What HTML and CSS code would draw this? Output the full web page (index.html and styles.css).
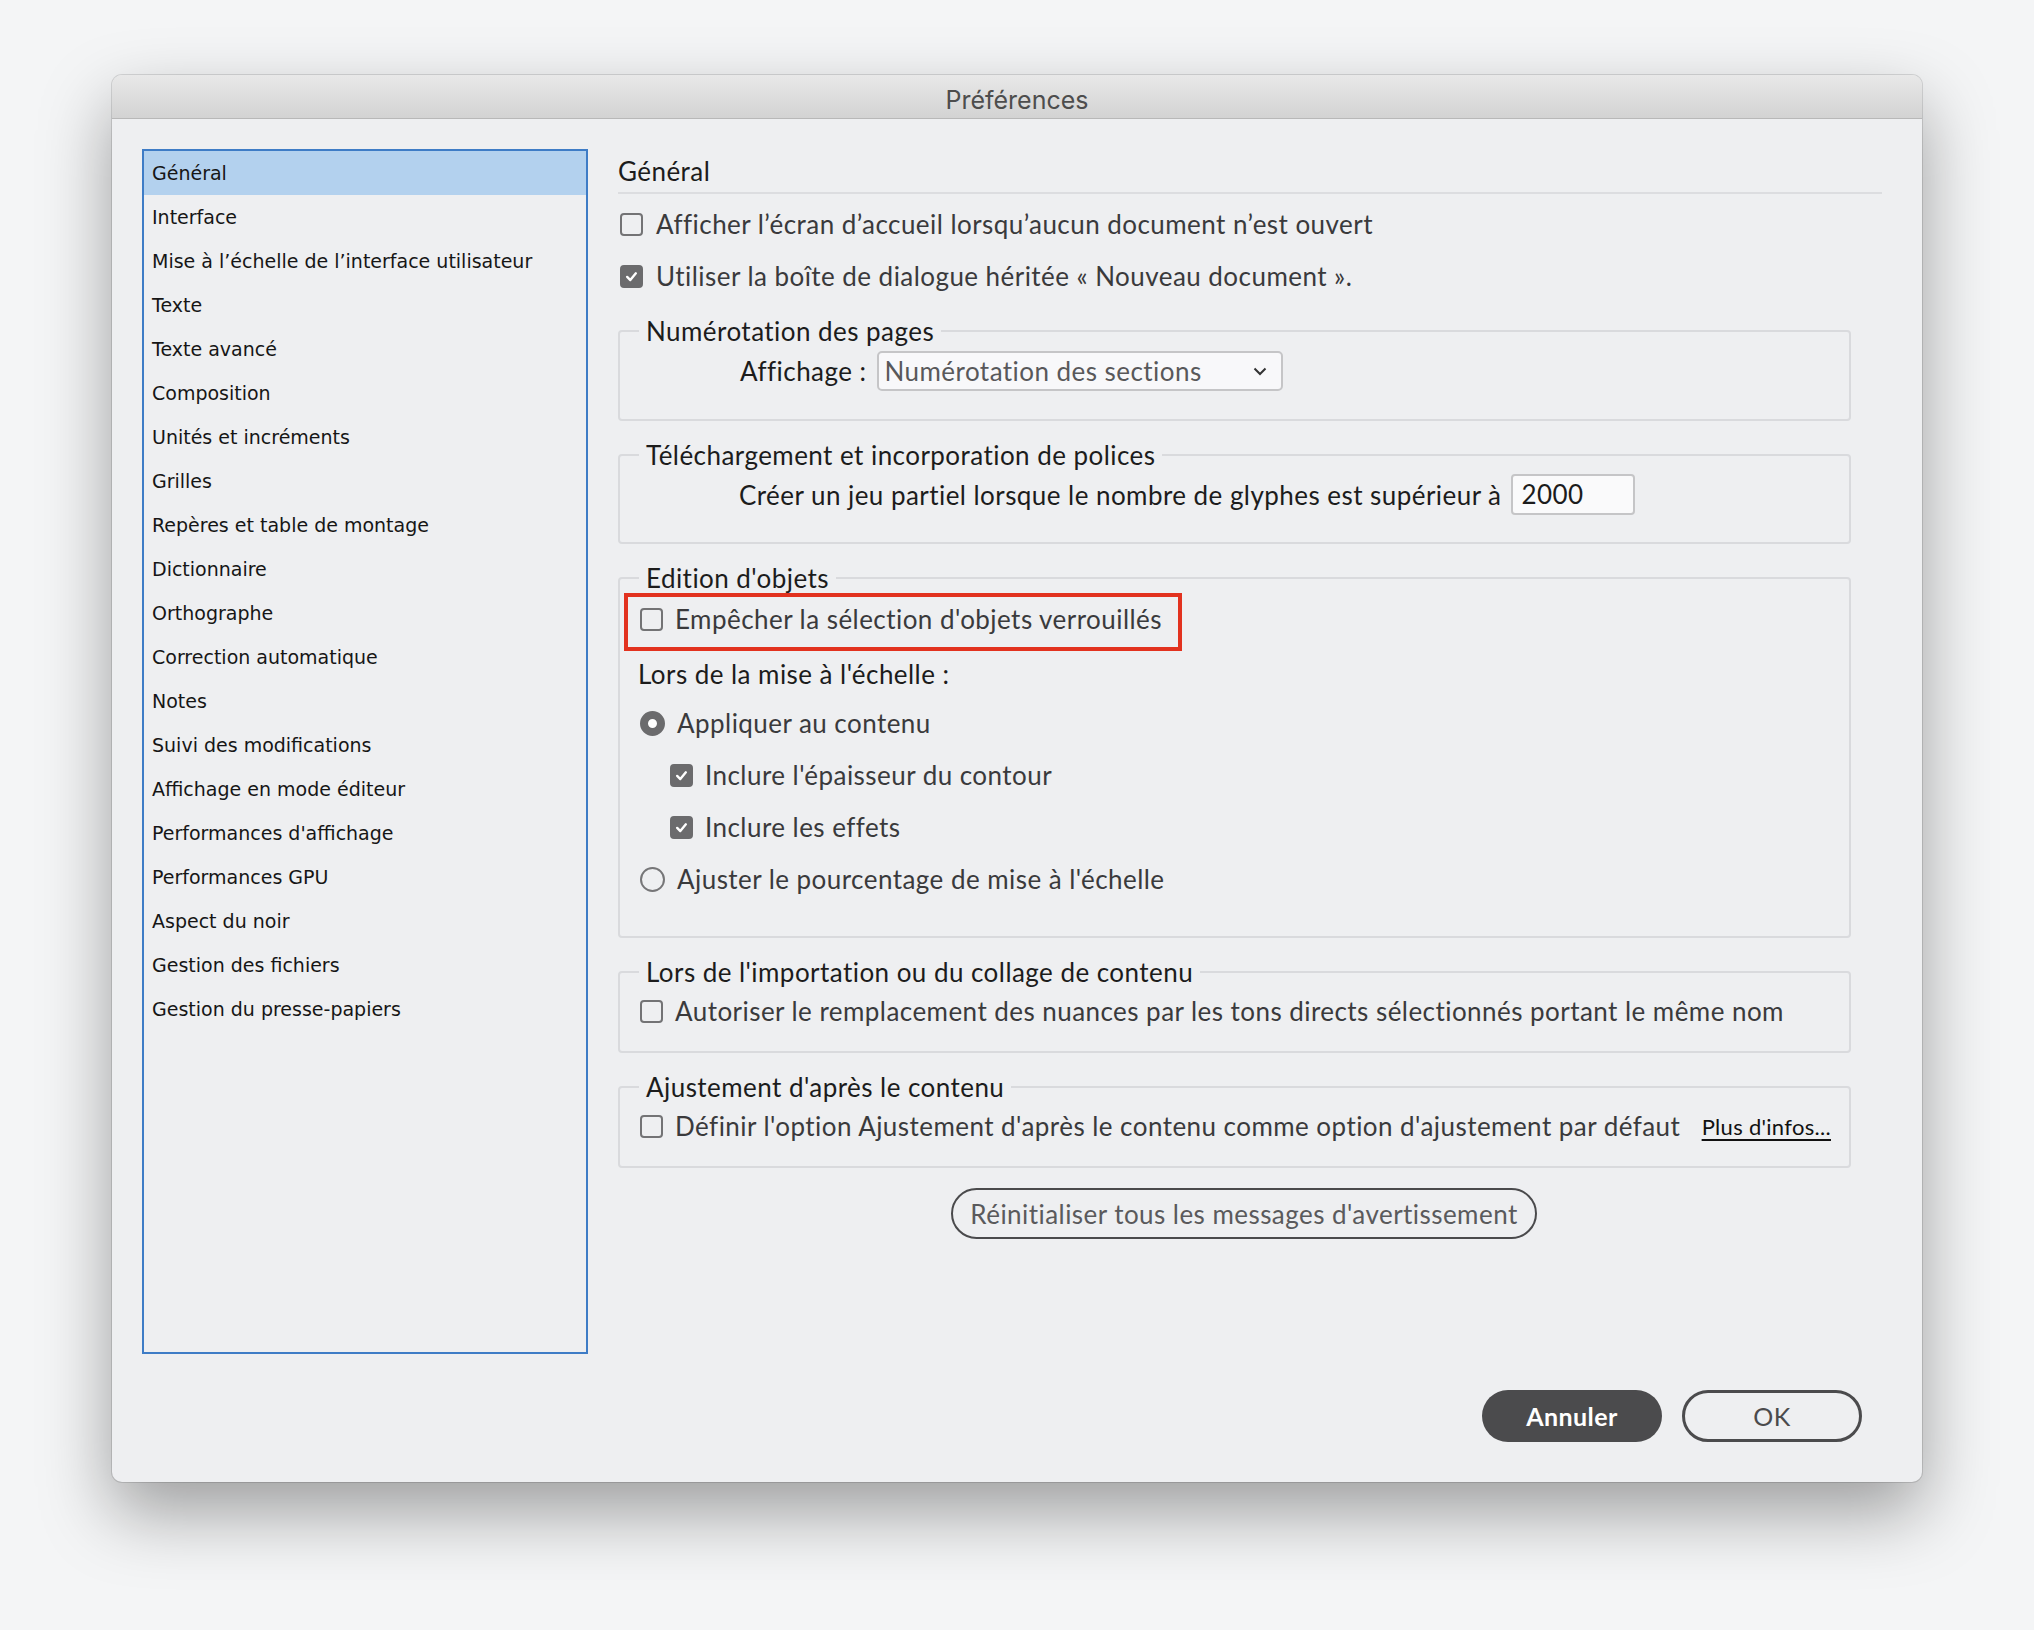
FILE: index.html
```html
<!DOCTYPE html>
<html lang="fr">

<head>
    <meta charset="UTF-8">
    <meta name="viewport" content="width=device-width, initial-scale=1.0">
    <title>Préférences</title>
    <link rel="stylesheet" href="styles.css">
</head>

<body>

    <div class="window">
        <div class="titlebar">Préférences</div>

        <div class="main">
            <ul class="nav">
                <li class="active">Général</li>
                <li>Interface</li>
                <li>Mise à l’échelle de l’interface utilisateur</li>
                <li>Texte</li>
                <li>Texte avancé</li>
                <li>Composition</li>
                <li>Unités et incréments</li>
                <li>Grilles</li>
                <li>Repères et table de montage</li>
                <li>Dictionnaire</li>
                <li>Orthographe</li>
                <li>Correction automatique</li>
                <li>Notes</li>
                <li>Suivi des modifications</li>
                <li>Affichage en mode éditeur</li>
                <li>Performances d'affichage</li>
                <li>Performances GPU</li>
                <li>Aspect du noir</li>
                <li>Gestion des fichiers</li>
                <li>Gestion du presse-papiers</li>
            </ul>

            <div class="panel">
                <h1 class="panel-title">Général</h1>

                <div class="opt top-opt">
                    <span class="box"></span>
                    Afficher l’écran d’accueil lorsqu’aucun document n’est ouvert
                </div>
                <div class="opt top-opt">
                    <span class="box checked"><svg viewBox="0 0 24 24"><path d="M6.5 12.5 L10.5 16.5 L17.5 8" /></svg></span>
                    Utiliser la boîte de dialogue héritée « Nouveau document ».
                </div>

                <fieldset class="group group-first">
                    <legend>Numérotation des pages</legend>
                    <div class="field-row pages-row">
                        <span class="field-label">Affichage :</span>
                        <div class="select">
                            <span>Numérotation des sections</span>
                            <svg class="chevron" viewBox="0 0 14 9"><path d="M1.5 1.5 L7 7 L12.5 1.5" /></svg>
                        </div>
                    </div>
                </fieldset>

                <fieldset class="group">
                    <legend>Téléchargement et incorporation de polices</legend>
                    <div class="field-row fonts-row">
                        <span class="field-label">Créer un jeu partiel lorsque le nombre de glyphes est supérieur à</span>
                        <div class="text-input">2000</div>
                    </div>
                </fieldset>

                <fieldset class="group">
                    <legend>Edition d'objets</legend>
                    <div class="opt highlight">
                        <span class="box"></span>
                        Empêcher la sélection d'objets verrouillés
                    </div>
                    <div class="sub-label">Lors de la mise à l'échelle :</div>
                    <div class="opt">
                        <span class="radio on"></span>
                        Appliquer au contenu
                    </div>
                    <div class="opt nested">
                        <span class="box checked"><svg viewBox="0 0 24 24"><path d="M6.5 12.5 L10.5 16.5 L17.5 8" /></svg></span>
                        Inclure l'épaisseur du contour
                    </div>
                    <div class="opt nested">
                        <span class="box checked"><svg viewBox="0 0 24 24"><path d="M6.5 12.5 L10.5 16.5 L17.5 8" /></svg></span>
                        Inclure les effets
                    </div>
                    <div class="opt last-opt">
                        <span class="radio"></span>
                        Ajuster le pourcentage de mise à l'échelle
                    </div>
                </fieldset>

                <fieldset class="group">
                    <legend>Lors de l'importation ou du collage de contenu</legend>
                    <div class="opt single">
                        <span class="box"></span>
                        Autoriser le remplacement des nuances par les tons directs sélectionnés portant le même nom
                    </div>
                </fieldset>

                <fieldset class="group">
                    <legend>Ajustement d'après le contenu</legend>
                    <div class="opt single">
                        <span class="box"></span>
                        Définir l'option Ajustement d'après le contenu comme option d'ajustement par défaut
                        <a class="more" href="#">Plus d'infos...</a>
                    </div>
                </fieldset>

                <button class="reset">Réinitialiser tous les messages d'avertissement</button>
            </div>
        </div>

        <div class="footer">
            <button class="btn btn-dark">Annuler</button>
            <button class="btn btn-outline">OK</button>
        </div>
    </div>

</body>

</html>
```

FILE: styles.css
```css
body {
    margin: 0;
    min-height: 1630px;
    box-sizing: border-box;
    padding: 75px 0 0 112px;
    background-color: #f4f5f6;
    font-family: "Lato", "Open Sans", sans-serif;
}

.window {
    width: 1810px;
    height: 1407px;
    box-sizing: border-box;
    background-color: #eeeff1;
    border-radius: 10px;
    box-shadow: 0 30px 70px rgba(0, 0, 0, .36), 0 0 0 1px rgba(0, 0, 0, .12);
    display: flex;
    flex-direction: column;
    overflow: hidden;
}

.titlebar {
    height: 36px;
    padding-top: 7px;
    line-height: 36px;
    border-bottom: 1px solid #b8b8b8;
    background: linear-gradient(#e8e8e8, #d3d3d3);
    text-align: center;
    font-family: "Inter", "Liberation Sans", sans-serif;
    font-size: 25px;
    color: #4d4d4d;
}

.main {
    display: flex;
    gap: 30px;
    padding: 30px 0 0 30px;
}

/* left list */

.nav {
    width: 442px;
    height: 1201px;
    margin: 0;
    padding: 0;
    list-style: none;
    border: 2px solid #3e7cc6;
    font-family: "DejaVu Sans", sans-serif;
    font-size: 19px;
    color: #161616;
}

.nav li {
    height: 44px;
    line-height: 44px;
    padding-left: 8px;
    white-space: nowrap;
}

.nav .active {
    background-color: #b3d1ee;
}

/* right panel */

.panel {
    width: 1264px;
    font-size: 26px;
    letter-spacing: .45px;
    color: #3a3a3c;
}

.panel-title {
    margin: 0;
    height: 41px;
    padding-top: 2px;
    line-height: 41px;
    font-size: 26px;
    font-weight: normal;
    color: #1c1c1c;
    border-bottom: 2px solid #dcdde0;
}

.opt {
    display: flex;
    align-items: center;
    height: 52px;
    gap: 13px;
    white-space: nowrap;
}

.top-opt {
    padding-left: 2px;
}

.top-opt:first-of-type {
    margin-top: 4px;
}

.box {
    width: 23px;
    height: 23px;
    box-sizing: border-box;
    border: 2px solid #737375;
    border-radius: 4px;
    flex-shrink: 0;
}

.box.checked {
    background-color: #6b6b6d;
    border-color: #6b6b6d;
}

.box svg {
    display: block;
    width: 19px;
    height: 19px;
}

.box svg path {
    fill: none;
    stroke: #fff;
    stroke-width: 3;
    stroke-linecap: round;
    stroke-linejoin: round;
}

.radio {
    width: 25px;
    height: 25px;
    box-sizing: border-box;
    border: 2px solid #767678;
    border-radius: 50%;
    flex-shrink: 0;
}

.radio.on {
    border: 8px solid #6b6b6d;
    background-color: #fff;
}

/* groups */

.group {
    width: 1233px;
    box-sizing: border-box;
    margin: 19px 0 0;
    padding: 0;
    min-width: 0;
    border: 2px solid #d9dadd;
    border-radius: 4px;
}

.group-first {
    margin-top: 14px;
}

.group legend {
    margin-left: 19px;
    padding: 0 7px;
    line-height: 30px;
    color: #1c1c1c;
}

.field-row {
    display: flex;
    align-items: center;
    gap: 10px;
    color: #1c1c1c;
}

.pages-row {
    height: 40px;
    margin: 5px 0 28px;
    padding-left: 120px;
}

.fonts-row {
    height: 41px;
    margin: 4px 0 27px;
    padding-left: 119px;
}

.select {
    width: 406px;
    height: 40px;
    box-sizing: border-box;
    border: 2px solid #c5c5c7;
    border-radius: 5px;
    background-color: #f8f8fa;
    display: flex;
    align-items: center;
    justify-content: space-between;
    padding: 0 14px 0 6px;
    color: #58585a;
}

.chevron {
    width: 14px;
    height: 9px;
}

.chevron path {
    fill: none;
    stroke: #333;
    stroke-width: 2;
}

.text-input {
    width: 124px;
    height: 41px;
    box-sizing: border-box;
    border: 2px solid #c5c5c7;
    border-radius: 4px;
    background-color: #fafafb;
    padding-left: 8px;
    line-height: 37px;
    color: #1c1c1c;
}

.group .opt {
    padding-left: 20px;
    gap: 12px;
}

.group .highlight {
    width: 558px;
    height: 58px;
    box-sizing: border-box;
    margin-left: 4px;
    padding: 0 0 6px 12px;
    border: 4px solid #e2321f;
}

.sub-label {
    height: 46px;
    line-height: 46px;
    padding-left: 18px;
    color: #1c1c1c;
}

.group .nested {
    padding-left: 50px;
}

.last-opt {
    margin-bottom: 31px;
}

.group .single {
    height: 48px;
    margin-bottom: 16px;
}

.more {
    margin-left: auto;
    margin-right: 18px;
    font-size: 22px;
    letter-spacing: .3px;
    color: #111;
    text-decoration-thickness: 2px;
    text-underline-offset: 4px;
}

.reset {
    display: block;
    width: 586px;
    height: 51px;
    margin: 20px 0 0 333px;
    border: 2px solid #4a4a4c;
    border-radius: 26px;
    background: none;
    font-family: inherit;
    font-size: 26px;
    letter-spacing: .45px;
    color: #5a5a5c;
}

/* footer */

.footer {
    display: flex;
    justify-content: flex-end;
    gap: 20px;
    padding: 36px 60px 40px 0;
}

.btn {
    width: 180px;
    height: 52px;
    border-radius: 26px;
    font-family: inherit;
    font-size: 25px;
    letter-spacing: .4px;
}

.btn-dark {
    border: none;
    background-color: #4b4b4d;
    color: #fff;
    font-weight: bold;
}

.btn-outline {
    border: 3px solid #4b4b4d;
    background: none;
    color: #4b4b4d;
}
```
